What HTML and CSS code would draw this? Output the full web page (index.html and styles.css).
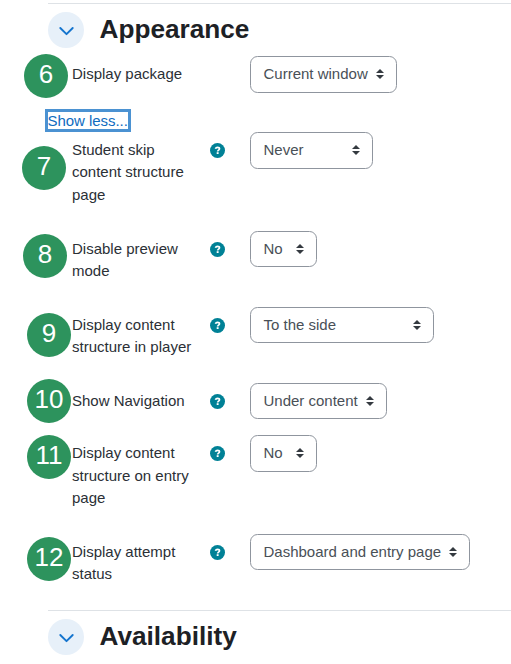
FILE: index.html
```html
<!DOCTYPE html>
<html lang="en">
<head>
<meta charset="utf-8">
<title>Appearance settings</title>
<link rel="stylesheet" href="styles.css">
</head>
<body>
<svg class="defs" width="0" height="0">
  <symbol id="chevron" viewBox="0 0 36 36"><path d="M12.3 16l6.2 6.2 6.2-6.2" fill="none" stroke="#1474ce" stroke-width="1.9" stroke-linecap="round" stroke-linejoin="round"/></symbol>
  <symbol id="sort" viewBox="0 0 8 10"><path d="M4 0L0 4h8zM4 10L0 6h8z" fill="#343a40"/></symbol>
  <symbol id="help" viewBox="0 0 15 15"><circle cx="7.5" cy="7.5" r="7.5" fill="#008196"/><path d="M5.4 5.7C5.8 4.7 6.5 4.3 7.5 4.3c1.2 0 2 .6 2 1.5 0 1.3-1.8 1.3-1.8 2.6" fill="none" stroke="#fff" stroke-width="1.7"/><rect x="6.7" y="9.2" width="1.9" height="1.8" fill="#fff"/></symbol>
</svg>
<main class="form">
  <section class="section appearance">
    <header class="section-head"><span class="toggle"><svg><use href="#chevron"/></svg></span><h2>Appearance</h2></header>
    <div class="row package">
      <span class="badge b6">6</span>
      <span class="label">Display package</span><span></span>
      <span class="select"><span>Current window</span><svg><use href="#sort"/></svg></span>
    </div>
    <div class="more"><a class="less" href="#">Show less...</a></div>
    <div class="row three">
      <span class="badge b7">7</span>
      <span class="label">Student skip<br>content structure<br>page</span><svg class="help"><use href="#help"/></svg>
      <span class="select never"><span>Never</span><svg><use href="#sort"/></svg></span>
    </div>
    <div class="row two">
      <span class="badge b8">8</span>
      <span class="label">Disable preview<br>mode</span><svg class="help"><use href="#help"/></svg>
      <span class="select no"><span>No</span><svg><use href="#sort"/></svg></span>
    </div>
    <div class="row two">
      <span class="badge b9">9</span>
      <span class="label">Display content<br>structure in player</span><svg class="help"><use href="#help"/></svg>
      <span class="select side"><span>To the side</span><svg><use href="#sort"/></svg></span>
    </div>
    <div class="row one">
      <span class="badge b10">10</span>
      <span class="label">Show Navigation</span><svg class="help"><use href="#help"/></svg>
      <span class="select under"><span>Under content</span><svg><use href="#sort"/></svg></span>
    </div>
    <div class="row three">
      <span class="badge b11">11</span>
      <span class="label">Display content<br>structure on entry<br>page</span><svg class="help"><use href="#help"/></svg>
      <span class="select no"><span>No</span><svg><use href="#sort"/></svg></span>
    </div>
    <div class="row two">
      <span class="badge b12">12</span>
      <span class="label">Display attempt<br>status</span><svg class="help"><use href="#help"/></svg>
      <span class="select dash"><span>Dashboard and entry page</span><svg><use href="#sort"/></svg></span>
    </div>
  </section>
  <section class="section">
    <header class="section-head"><span class="toggle"><svg><use href="#chevron"/></svg></span><h2>Availability</h2></header>
  </section>
</main>
</body>
</html>
```
FILE: styles.css
```css
* { box-sizing: border-box; }
body {
  margin: 0;
  background: #fff;
  color: #2b3036;
  font: 15px/22.3px "Liberation Sans", Arial, sans-serif;
  overflow: hidden;
}
.defs { position: absolute; }
.form { padding: 3px 0 0 48px; }
.section { border-top: 1px solid #dee2e6; }
.appearance { height: 607px; }
.section-head {
  display: flex;
  align-items: center;
  gap: 15.5px;
  height: 44px;
  margin-top: 4px;
}
.toggle, .toggle svg { display: block; width: 36px; height: 36px; }
.toggle { margin-top: -1px; border-radius: 50%; background: #e7f0f9; }
h2 { margin: -2px 0 0; color: #1d2125; font-size: 26.2px; line-height: 32px; }
.row {
  position: relative;
  display: grid;
  grid-template-columns: 137.5px 40.5px 1fr;
  align-items: start;
  padding-left: 24px;
}
.package { height: 52.5px; margin-top: 4px; }
.one { height: 52.5px; }
.two { height: 76px; }
.three { height: 98.7px; }
.label { padding-top: 7.2px; white-space: nowrap; }
.help { width: 15px; height: 15px; margin-top: 11px; }
.select {
  display: flex;
  align-items: center;
  justify-content: space-between;
  width: 147px;
  height: 36.5px;
  padding: 0 12px 0 12.5px;
  border: 1px solid #8f959e;
  border-radius: 7.5px;
  color: #495057;
  white-space: nowrap;
}
.select svg { width: 8px; height: 10px; }
.never { width: 123px; }
.no { width: 67px; }
.side { width: 184px; }
.under { width: 137px; }
.dash { width: 220px; }
.more { height: 23.5px; margin-left: -3px; }
.less {
  display: inline-block;
  width: 86px;
  height: 23px;
  border: 3px solid #4b92d2;
  color: #0f6cbf;
  line-height: 18px;
  text-decoration: none;
  text-indent: -0.5px;
  letter-spacing: -0.05px;
  white-space: nowrap;
}
/* Numbered callouts lie over the form. */
.badge {
  position: absolute;
  left: -21px;
  width: 44px;
  height: 44px;
  border-radius: 50%;
  background: #2d935d;
  color: #fff;
  font-size: 26px;
  line-height: 41px;
  text-align: center;
}
.b6 { left: -24px; top: -2px; }
.b7 { left: -26px; top: 14px; }
.b8 { left: -25px; top: 3px; }
.b9 { top: 6.5px; }
.b10 { top: -3.5px; }
.b11 { top: 0; }
.b12 { top: 3px; }
```
